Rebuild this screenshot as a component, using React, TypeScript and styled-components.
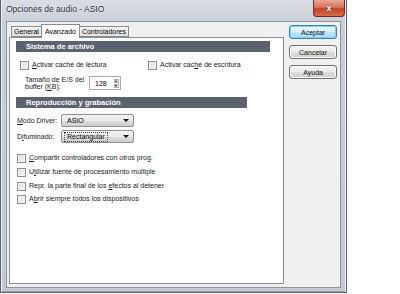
import styled, { createGlobalStyle } from "styled-components";

const Global = createGlobalStyle`
    html, body {
        margin: 0;
        background: #ffffff;
    }
    body {
        font-family: "Liberation Sans", Arial, sans-serif;
        font-size: 7px;
        color: #000;
        white-space: nowrap;
    }
`;

const Window = styled.div`
    box-sizing: border-box;
    width: 347px;
    height: 293px;
    display: flex;
    flex-direction: column;
    padding: 0 5px 4px 5px;
    border: 1px solid #5c6068;
    border-top: none;
    background: linear-gradient(180deg, #d9dee6 0px, #c9cfd8 22px, #c3c9d2 100%);
    box-shadow: inset 1px 0 0 #eef1f5, inset -1px 0 0 #eef1f5, inset 0 -1px 0 #9aa0a9;
`;

const TitleBar = styled.div`
    height: 21px;
    display: flex;
    justify-content: space-between;
    align-items: flex-start;
`;

const Title = styled.span`
    margin-top: 4px;
    font-size: 8.5px;
    color: #2b2f36;
    text-shadow: 0 0 3px #ffffff;
`;

const CloseButton = styled.div`
    width: 32px;
    height: 17px;
    margin-right: -4px;
    box-sizing: border-box;
    border: 1px solid #6e2a22;
    border-top: none;
    border-radius: 0 0 4px 4px;
    background: linear-gradient(180deg, #e8a996 0%, #d7745e 45%, #c3402a 55%, #d86d50 100%);
    color: #ffffff;
    font-weight: bold;
    font-size: 9px;
    display: flex;
    align-items: center;
    justify-content: center;
    text-shadow: 0 0 2px #5a1a10;
`;

const Client = styled.div`
    flex: 1;
    display: flex;
    gap: 5px;
    padding: 2px 3px 3px 2px;
    background: #f0f0f0;
    border: 1px solid #8d929b;
`;

const TabArea = styled.div`
    width: 276px;
    display: flex;
    flex-direction: column;
`;

const TabRow = styled.div`
    height: 13px;
    display: flex;
    align-items: flex-end;
    padding-left: 2px;
    position: relative;
    z-index: 1;
`;

const Tab = styled.div<{ $active?: boolean }>`
    box-sizing: border-box;
    height: ${(p) => (p.$active ? "14px" : "11px")};
    margin-bottom: ${(p) => (p.$active ? "-1px" : "0")};
    padding: 0 ${(p) => (p.$active ? "3px" : "2px")};
    border: 1px solid #898c95;
    border-bottom: ${(p) => (p.$active ? "none" : "1px solid #898c95")};
    margin-right: -1px;
    background: ${(p) => (p.$active ? "#ffffff" : "linear-gradient(180deg, #f4f4f4, #e2e2e2)")};
    display: flex;
    align-items: center;
    line-height: 1;
`;

const Panel = styled.div`
    flex: 1;
    background: #ffffff;
    border: 1px solid #898c95;
    padding: 3px 0 0 6px;
    display: flex;
    flex-direction: column;
`;

const SectionHeader = styled.div<{ $width: number; $top: number }>`
    box-sizing: border-box;
    width: ${(p) => p.$width}px;
    height: 11px;
    margin-top: ${(p) => p.$top}px;
    padding-left: 10px;
    background: #5d6271;
    color: #ffffff;
    font-weight: bold;
    font-size: 7.5px;
    display: flex;
    align-items: center;
`;

const Row = styled.div<{ $top: number; $indent?: number }>`
    display: flex;
    align-items: center;
    margin-top: ${(p) => p.$top}px;
    padding-left: ${(p) => p.$indent ?? 0}px;
`;

const CheckItem = styled.label<{ $width?: number }>`
    display: flex;
    align-items: center;
    gap: 3px;
    width: ${(p) => (p.$width ? `${p.$width}px` : "auto")};
    color: #1a1a1a;
    line-height: 10px;
`;

const Box = styled.span`
    box-sizing: border-box;
    width: 9px;
    height: 9px;
    border: 1px solid #8f8f8f;
    background: linear-gradient(135deg, #dcdcdc, #f7f7f7);
    box-shadow: inset 0 0 0 1px #f4f4f4;
`;

const BufferLabel = styled.div`
    width: 64px;
    line-height: 7px;
    color: #1a1a1a;
`;

const Spin = styled.div`
    box-sizing: border-box;
    width: 32px;
    height: 14px;
    border: 1px solid #abadb3;
    display: flex;
    align-items: center;
    justify-content: space-between;
    padding: 0 1px 0 5px;
`;

const SpinArrows = styled.div`
    display: flex;
    flex-direction: column;
    gap: 1px;
`;

const SpinArrow = styled.span<{ $down?: boolean }>`
    width: 5px;
    height: 4px;
    border: 1px solid #b0b0b0;
    box-sizing: border-box;
    background: #eeeeee;
    position: relative;
    &::after {
        content: "";
        position: absolute;
        left: 0;
        top: 0;
        border-left: 1.5px solid transparent;
        border-right: 1.5px solid transparent;
        ${(p) => (p.$down ? "border-top: 2px solid #222;" : "border-bottom: 2px solid #222;")}
    }
`;

const FieldLabel = styled.span`
    width: 44px;
    color: #1a1a1a;
`;

const Combo = styled.div`
    box-sizing: border-box;
    width: 73px;
    height: 13px;
    border: 1px solid #8e8f8f;
    border-radius: 2px;
    background: linear-gradient(180deg, #f2f2f2 0%, #ebebeb 50%, #dddddd 51%, #cfcfcf 100%);
    display: flex;
    align-items: center;
    justify-content: space-between;
    padding: 0 4px 0 2px;
`;

const ComboText = styled.span<{ $focus?: boolean }>`
    padding: 0 2px;
    border: 1px ${(p) => (p.$focus ? "dotted #444" : "solid transparent")};
    line-height: 8px;
`;

const ComboArrow = styled.span`
    border-left: 3px solid transparent;
    border-right: 3px solid transparent;
    border-top: 3px solid #111;
`;

const ButtonColumn = styled.div`
    width: 48px;
    display: flex;
    flex-direction: column;
    gap: 6px;
    padding-top: 1px;
`;

const Button = styled.div<{ $default?: boolean }>`
    box-sizing: border-box;
    height: 14px;
    border: 1px solid ${(p) => (p.$default ? "#3c7fb1" : "#707070")};
    border-radius: 3px;
    background: ${(p) =>
        p.$default
            ? "linear-gradient(180deg, #eaf6fd 0%, #d9f0fc 50%, #bee6fd 51%, #a7d9f5 100%)"
            : "linear-gradient(180deg, #f2f2f2 0%, #ebebeb 50%, #dddddd 51%, #cfcfcf 100%)"};
    box-shadow: inset 0 0 0 1px ${(p) => (p.$default ? "#7ed3f7" : "#fcfcfc")};
    display: flex;
    align-items: center;
    justify-content: center;
    color: #111;
`;

const checks = [
    { top: 10, text: <><u>C</u>ompartir controladores con otros prog.</> },
    { top: 4, text: <>U<u>t</u>ilizar fuente de procesamiento múltiple</> },
    { top: 4, text: <>Repr. la parte final de los <u>e</u>fectos al detener</> },
    { top: 3, text: <>A<u>b</u>rir siempre todos los dispositivos</> },
];

export default function App() {
    return (
        <>
            <Global />
            <Window>
                <TitleBar>
                    <Title>Opciones de audio - ASIO</Title>
                    <CloseButton>x</CloseButton>
                </TitleBar>
                <Client>
                    <TabArea>
                        <TabRow>
                            <Tab>General</Tab>
                            <Tab $active>Avanzado</Tab>
                            <Tab>Controladores</Tab>
                        </TabRow>
                        <Panel>
                            <SectionHeader $width={254} $top={0}>Sistema de archivo</SectionHeader>
                            <Row $top={8} $indent={4}>
                                <CheckItem $width={128}>
                                    <Box />
                                    <span><u>A</u>ctivar caché de lectura</span>
                                </CheckItem>
                                <CheckItem>
                                    <Box />
                                    <span>Activar cac<u>h</u>é de escritura</span>
                                </CheckItem>
                            </Row>
                            <Row $top={6} $indent={9}>
                                <BufferLabel>
                                    Tamaño de E/S del<br />buffer (<u>K</u>B):
                                </BufferLabel>
                                <Spin>
                                    <span>128</span>
                                    <SpinArrows>
                                        <SpinArrow />
                                        <SpinArrow $down />
                                    </SpinArrows>
                                </Spin>
                            </Row>
                            <SectionHeader $width={231} $top={7}>Reproducción y grabación</SectionHeader>
                            <Row $top={6} $indent={1}>
                                <FieldLabel><u>M</u>odo Driver:</FieldLabel>
                                <Combo>
                                    <ComboText>ASIO</ComboText>
                                    <ComboArrow />
                                </Combo>
                            </Row>
                            <Row $top={3} $indent={1}>
                                <FieldLabel>D<u>i</u>fuminado:</FieldLabel>
                                <Combo>
                                    <ComboText $focus>Rectangular</ComboText>
                                    <ComboArrow />
                                </Combo>
                            </Row>
                            {checks.map((c, i) => (
                                <Row key={i} $top={c.top} $indent={1}>
                                    <CheckItem>
                                        <Box />
                                        <span>{c.text}</span>
                                    </CheckItem>
                                </Row>
                            ))}
                        </Panel>
                    </TabArea>
                    <ButtonColumn>
                        <Button $default>Aceptar</Button>
                        <Button>Cancelar</Button>
                        <Button>Ayuda</Button>
                    </ButtonColumn>
                </Client>
            </Window>
        </>
    );
}
